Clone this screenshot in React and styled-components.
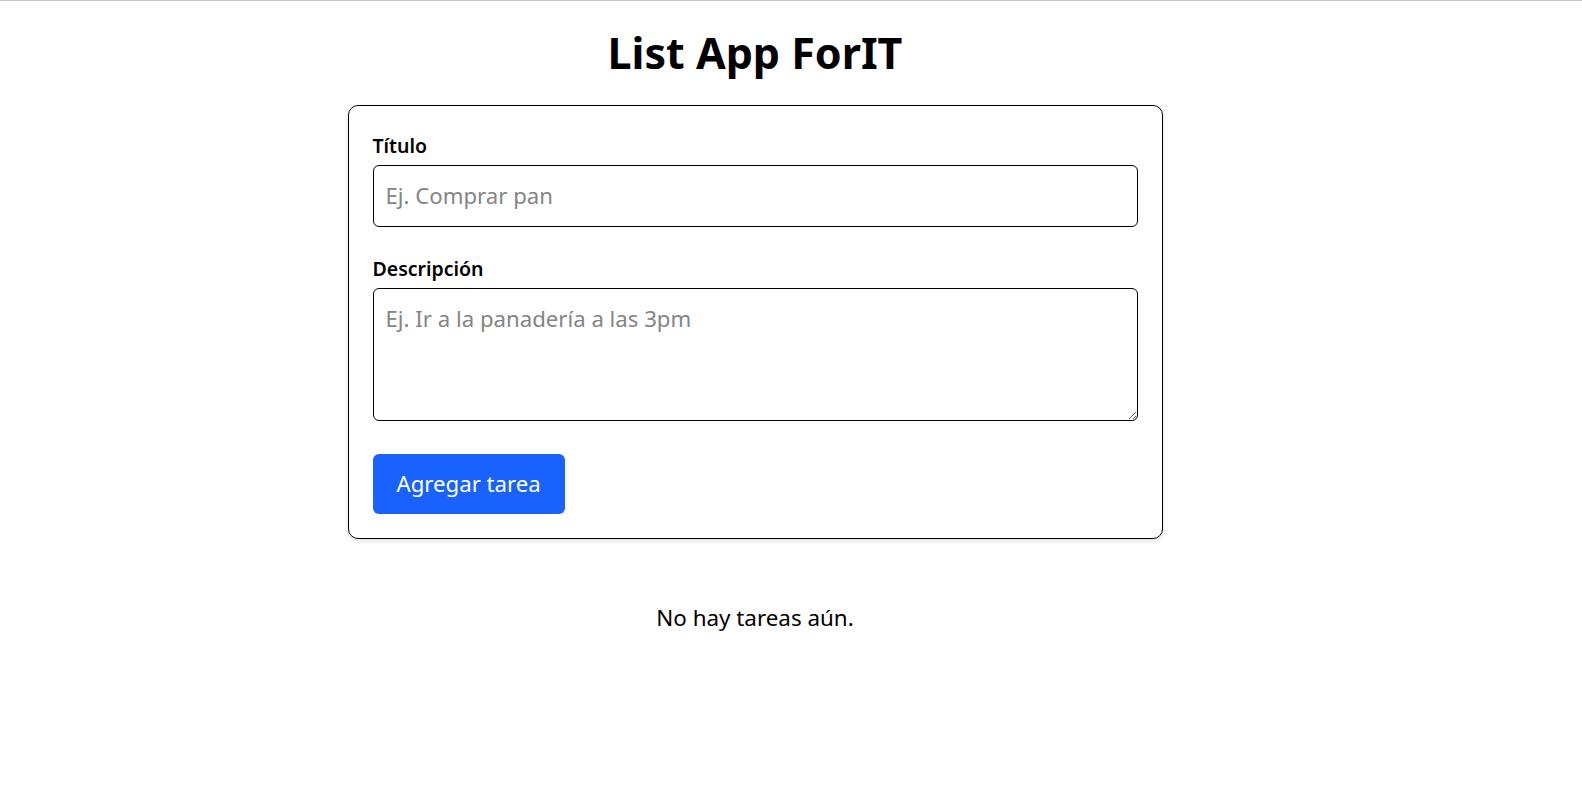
import styled, { createGlobalStyle } from 'styled-components';

const GlobalStyle = createGlobalStyle`
  * { box-sizing: border-box; }
  body {
    margin: 0;
    border-top: 1px solid #c6c6c6;
    background: #fff;
    color: #000;
    font-family: "Noto Sans", "Open Sans", sans-serif;
  }
`;

const Page = styled.main`
  width: calc(100% - 72px);
  display: flex;
  flex-direction: column;
  align-items: center;
  padding-top: 26px;
`;

const Title = styled.h1`
  margin: 0 0 26px;
  font-size: 43px;
  font-weight: 700;
  line-height: 1.2;
`;

const Card = styled.form`
  width: 815px;
  padding: 24px;
  border: 1px solid #000;
  border-radius: 10px;
  box-shadow: 0 2px 5px rgba(0, 0, 0, 0.12);
  display: flex;
  flex-direction: column;
`;

const Field = styled.div`
  display: flex;
  flex-direction: column;
  margin-bottom: ${p => p.$spacing || 26}px;
`;

const Label = styled.label`
  font-size: 19.5px;
  font-weight: 600;
  line-height: 1.6;
  margin-bottom: 4px;
`;

const Input = styled.input`
  height: 62px;
  padding: 0 12px;
  border: 1px solid #000;
  border-radius: 6px;
  font: inherit;
  font-size: 22.2px;
  &::placeholder { color: #858585; }
`;

const TextArea = styled.textarea`
  height: 133px;
  padding: 13px 12px;
  border: 1px solid #000;
  border-radius: 6px;
  font: inherit;
  font-size: 22.2px;
  line-height: 1.5;
  resize: vertical;
  &::placeholder { color: #858585; }
`;

const Button = styled.button`
  align-self: flex-start;
  height: 60px;
  padding: 0 24px;
  border: none;
  border-radius: 6px;
  background: #1a62fd;
  color: #fff;
  font: inherit;
  font-size: 22.2px;
  cursor: pointer;
`;

const Empty = styled.p`
  margin: 63px 0 0;
  font-size: 22.4px;
`;

export default function App() {
  return (
    <>
      <GlobalStyle />
      <Page>
        <Title>List App ForIT</Title>
        <Card onSubmit={e => e.preventDefault()}>
          <Field>
            <Label htmlFor="title">Título</Label>
            <Input id="title" placeholder="Ej. Comprar pan" />
          </Field>
          <Field $spacing={33}>
            <Label htmlFor="desc">Descripción</Label>
            <TextArea id="desc" placeholder="Ej. Ir a la panadería a las 3pm" />
          </Field>
          <Button type="submit">Agregar tarea</Button>
        </Card>
        <Empty>No hay tareas aún.</Empty>
      </Page>
    </>
  );
}
